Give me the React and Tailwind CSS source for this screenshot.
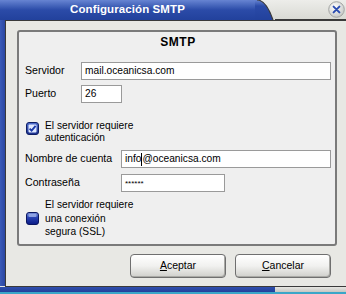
import React from 'react';

const font = { fontFamily: '"Liberation Sans", Arial, sans-serif' };

function CheckedBox() {
  return (
    <svg width="13" height="13" viewBox="0 0 13 13" className="shrink-0">
      <defs>
        <linearGradient id="cb1" x1="0" y1="0" x2="0" y2="1">
          <stop offset="0" stopColor="#4f6fd0" />
          <stop offset="1" stopColor="#1a2f8c" />
        </linearGradient>
      </defs>
      <rect x="0.5" y="0.5" width="12" height="12" rx="2.5" fill="url(#cb1)" stroke="#0d1c63" />
      <rect x="2.5" y="2.5" width="8" height="8" rx="1" fill="#dfe8ff" />
      <path d="M3.6 6.6 L5.6 8.6 L9.6 3.8" fill="none" stroke="#1b3aa8" strokeWidth="1.8" />
    </svg>
  );
}

function EmptyBox() {
  return (
    <svg width="13" height="13" viewBox="0 0 13 13" className="shrink-0">
      <defs>
        <linearGradient id="cb2" x1="0" y1="0" x2="0" y2="1">
          <stop offset="0" stopColor="#7d95dc" />
          <stop offset="0.4" stopColor="#2a44b4" />
          <stop offset="1" stopColor="#0a1a86" />
        </linearGradient>
      </defs>
      <rect x="0.5" y="0.5" width="12" height="12" rx="2.5" fill="url(#cb2)" stroke="#0b1660" />
      <rect x="2.5" y="2" width="8" height="3" rx="1" fill="#9fb2ea" opacity="0.8" />
    </svg>
  );
}

function Input({ className, children }) {
  return (
    <div className={`h-[18px] bg-white border border-[#9a9a9a] flex items-center pl-[3px] text-[10.2px] text-black ${className}`}>
      {children}
    </div>
  );
}

function Button({ first, rest }) {
  return (
    <button className="w-[96px] h-[24px] rounded-[4px] border border-[#6f6f6f] bg-linear-to-b from-[#ffffff] via-[#f1f1ef] to-[#cfcfcb] text-[10.5px] text-black shadow-[inset_-1px_-1px_0_#a9a9a5]">
      <span className="underline">{first}</span>
      {rest}
    </button>
  );
}

export default function App() {
  return (
    <div style={font} className="w-[346px] h-[294px] overflow-hidden flex flex-col bg-[#e8e8e4] select-none">
      {/* title bar */}
      <div className="h-[20px] flex shrink-0">
        <div className="w-[255px] bg-linear-to-b from-[#6784d2] via-[#2b4ba8] to-[#22419c] flex items-center justify-center">
          <span className="text-white font-bold text-[11.5px] leading-none tracking-[0.1px]">Configuración SMTP</span>
        </div>
        <svg width="20" height="20" viewBox="0 0 20 20" className="shrink-0">
          <defs>
            <linearGradient id="tg" x1="0" y1="0" x2="0" y2="1">
              <stop offset="0" stopColor="#ededea" />
              <stop offset="1" stopColor="#d9dad4" />
            </linearGradient>
            <linearGradient id="tb" x1="0" y1="0" x2="0" y2="1">
              <stop offset="0" stopColor="#6784d2" />
              <stop offset="0.3" stopColor="#2b4ba8" />
              <stop offset="1" stopColor="#22419c" />
            </linearGradient>
          </defs>
          <rect width="20" height="20" fill="url(#tg)" />
          <path d="M0 0 L2 0 C9 0 14 8 18 20 L0 20 Z" fill="url(#tb)" />
          <path d="M2 0 C9 0 14 8 18 20" fill="none" stroke="#3a3a3a" strokeWidth="1.2" />
        </svg>
        <div className="flex-1 bg-linear-to-b from-[#ededea] to-[#d9dad4] flex items-center justify-end pr-[1px] border-b border-[#3a3a3a]">
          <svg width="17" height="17" viewBox="0 0 17 17">
            <defs>
              <radialGradient id="cl" cx="0.4" cy="0.35" r="0.7">
                <stop offset="0" stopColor="#ffffff" />
                <stop offset="1" stopColor="#c4c6c4" />
              </radialGradient>
            </defs>
            <circle cx="8.5" cy="8.5" r="7.8" fill="url(#cl)" stroke="#a2a4a2" />
            <path d="M5.6 5.6 L11.4 11.4 M11.4 5.6 L5.6 11.4" stroke="#2a4cb0" strokeWidth="2" strokeLinecap="round" />
          </svg>
        </div>
      </div>

      {/* body */}
      <div className="flex flex-1">
        <div className="w-[5px] bg-linear-to-r from-[#3a5ab8] to-[#2a46a2] shrink-0" />
        <div className="flex-1 flex flex-col border-l border-t border-[#3a3a3a] pl-[11px] pt-[9px]">
          <div className="w-[320px] h-[216px] box-border border-2 border-[#7a7a7a] rounded-[3px] bg-[#efefef] flex flex-col pl-[6px] pr-[4px] text-black">
            <div className="mt-[3px] h-[14px] flex items-center justify-center font-bold text-[12px] tracking-[0.6px]">SMTP</div>

            <div className="mt-[13px] flex items-center">
              <span className="w-[56px] text-[10.6px]">Servidor</span>
              <Input className="flex-1">mail.oceanicsa.com</Input>
            </div>

            <div className="mt-[5px] flex items-center">
              <span className="w-[56px] text-[10.6px]">Puerto</span>
              <Input className="w-[41px]">26</Input>
            </div>

            <div className="mt-[17px] flex items-start">
              <div className="mt-[2px] ml-[1px]"><CheckedBox /></div>
              <div className="ml-[6px] text-[10.2px] leading-[12px]">
                <div>El servidor requiere</div>
                <div>autenticación</div>
              </div>
            </div>

            <div className="mt-[6px] flex items-center">
              <span className="w-[96px] text-[10.6px] whitespace-nowrap">Nombre de cuenta</span>
              <Input className="flex-1">
                info<span className="inline-block w-px h-[13px] bg-black" />@oceanicsa.com
              </Input>
            </div>

            <div className="mt-[6px] flex items-center">
              <span className="w-[96px] text-[10.6px]">Contraseña</span>
              <Input className="w-[104px]">
                <span className="text-[8px] leading-none pt-[1px]">******</span>
              </Input>
            </div>

            <div className="mt-[6px] flex items-center">
              <div className="ml-[1px]"><EmptyBox /></div>
              <div className="ml-[6px] text-[10.2px] leading-[13.5px]">
                <div>El servidor requiere</div>
                <div>una conexión</div>
                <div>segura (SSL)</div>
              </div>
            </div>
          </div>

          <div className="w-[320px] mt-[8px] flex justify-end gap-[9px] pr-[6px]">
            <Button first="A" rest="ceptar" />
            <Button first="C" rest="ancelar" />
          </div>
        </div>
      </div>

      {/* bottom border */}
      <div className="shrink-0 flex flex-col">
        <div className="h-px ml-[5px] bg-[#3a3a3a]" />
        <div className="h-[5px] flex">
          <div className="w-[275px] bg-linear-to-b from-[#2f4fae] to-[#22409a]" />
          <div className="flex-1 bg-linear-to-b from-[#e6e6e2] to-[#c6c6c2]" />
        </div>
        <div className="h-[2px] bg-[#3aa6c8]" />
      </div>
    </div>
  );
}
